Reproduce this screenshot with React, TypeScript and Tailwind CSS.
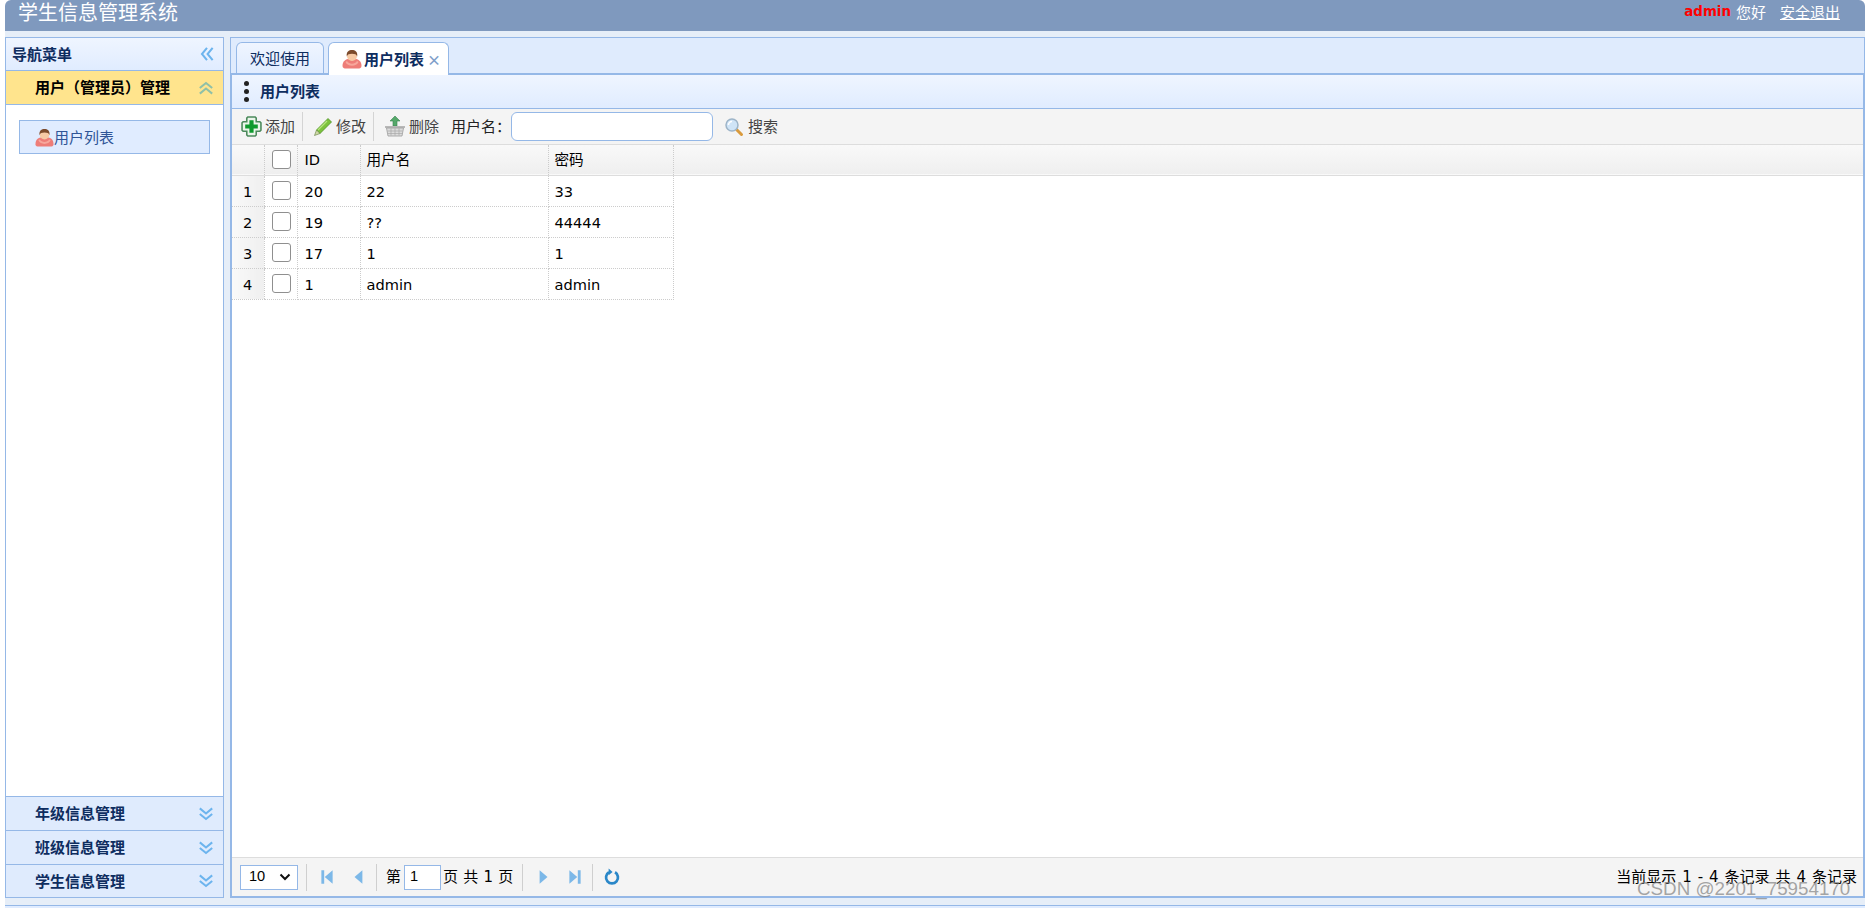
import React from "react";

const cjk = "font-['Noto_Sans_CJK_SC','Noto_Sans',sans-serif]";

function UserIcon({ size = 20 }: { size?: number }) {
  return (
    <svg width={size} height={size} viewBox="0 0 20 20" className="shrink-0">
      <path d="M0.500 17c0-5 3-7.500 9.500-7.500s9.500 2.500 9.500 7.500c0 2-2 2.500-3 2.500H3.500c-1 0-3-.5-3-2.500z" fill="#ee7d78" />
      <path d="M5 12c2 3.500 8 3.500 10 0l1.500 1c-2 5-11 5-13 0z" fill="#f7a79c" />
      <circle cx="10" cy="7" r="5" fill="#f6c9a4" />
      <path d="M4.800 7.500C4 2.500 7 1 10 1s6 1.500 5.200 6.500C14.500 5.500 13 4.800 10 4.800S5.500 5.500 4.800 7.500z" fill="#7b4a2b" />
    </svg>
  );
}

function DoubleChevron({ dir }: { dir: "up" | "down" | "left" }) {
  const rot = dir === "up" ? "rotate(180 8 8)" : dir === "left" ? "rotate(90 8 8)" : undefined;
  return (
    <svg width="18" height="18" viewBox="0 0 16 16" className="shrink-0">
      <g transform={rot} fill="none" stroke={dir === "up" ? "#8fc0a8" : "#6cb4ee"} strokeWidth="1.800">
        <path d="M2.500 3l5.500 4.500L13.500 3" />
        <path d="M2.500 8l5.500 4.500L13.500 8" />
      </g>
    </svg>
  );
}

function PlusIcon() {
  return (
    <svg width="21" height="21" viewBox="0 0 20 20" className="shrink-0">
      <path d="M6.500 1h7l1 1v3.500H18l1 1v7l-1 1h-3.500V18l-1 1h-7l-1-1v-3.500H2l-1-1v-7l1-1h3.500V2z" fill="#eaf5ea" stroke="#4c8a5c" strokeWidth="1.500" />
      <path d="M8 4h4v4h4v4h-4v4H8v-4H4V8h4z" fill="#0f9a2e" />
    </svg>
  );
}

function PencilIcon() {
  return (
    <svg width="20" height="20" viewBox="0 0 20 20" className="shrink-0">
      <path d="M15 1.500l3.500 3.500L7 16.500 3.500 13z" fill="#7cc23c" stroke="#4d8f22" strokeWidth="0.800" />
      <path d="M3.500 13L7 16.500 1.500 18.500z" fill="#cfd8a8" stroke="#5f7d3a" strokeWidth="0.600" />
      <path d="M14 4L5 13" stroke="#b6e47e" strokeWidth="1.200" />
    </svg>
  );
}

function BasketIcon() {
  return (
    <svg width="22" height="21" viewBox="0 0 22 21" className="shrink-0">
      <path d="M11 0l5 5h-3v5H9V5H6z" fill="#55a86a" stroke="#3b8450" strokeWidth="0.600" />
      <path d="M1 10h20v2H1z" fill="#b8b8b8" />
      <path d="M2.500 12h17l-1.500 8H4z" fill="#dcdcdc" stroke="#9c9c9c" strokeWidth="0.800" />
      <path d="M7 12.500v7M11 12.500v7M15 12.500v7M3.500 15h15M4 17.500h14" stroke="#a8a8a8" strokeWidth="0.700" />
    </svg>
  );
}

function SearchIcon() {
  return (
    <svg width="20" height="20" viewBox="0 0 20 20" className="shrink-0">
      <path d="M12.500 12.500l5 5" stroke="#d99a3c" strokeWidth="3" strokeLinecap="round" />
      <circle cx="8" cy="8" r="6" fill="#cfe4f7" stroke="#9db4c8" strokeWidth="1.500" />
      <path d="M4.500 8a3.500 3.500 0 0 1 3.500-3.500" stroke="#fff" strokeWidth="1.500" fill="none" />
    </svg>
  );
}

function PagerIcon({ kind }: { kind: "first" | "prev" | "next" | "last" }) {
  const c = "#7cb8e8";
  return (
    <svg width="18" height="18" viewBox="0 0 16 16" className="shrink-0">
      {kind === "first" && <path d="M3 2h2.500v12H3zM13 2v12L6 8z" fill={c} />}
      {kind === "prev" && <path d="M11 2v12L4 8z" fill={c} />}
      {kind === "next" && <path d="M5 2v12l7-6z" fill={c} />}
      {kind === "last" && <path d="M10.500 2H13v12h-2.500zM3 2v12l7-6z" fill={c} />}
    </svg>
  );
}

function RefreshIcon() {
  return (
    <svg width="18" height="18" viewBox="0 0 16 16" className="shrink-0">
      <path d="M5.300 3.800a5.300 5.300 0 1 0 5.400 0" fill="none" stroke="#2a87c8" strokeWidth="2.400" />
      <path d="M5 0.500v6L8.500 3.500z" fill="#2a87c8" />
    </svg>
  );
}

function Box() {
  return <span className="block w-[19px] h-[19px] bg-white border border-[#8f8f8f] rounded-[3px]" />;
}

function Sep() {
  return <span className="block w-px h-[29px] bg-[#d4d4d4] shrink-0" />;
}

function PagerSep() {
  return <span className="block w-px h-[27px] bg-[#cfcfcf] shrink-0" />;
}

function ToolBtn({ icon, label, className }: { icon: React.ReactNode; label: string; className?: string }) {
  return (
    <div className={"flex items-center shrink-0 gap-[3px] text-[#444] text-[15px] " + (className ?? "")}>
      {icon}
      <span>{label}</span>
    </div>
  );
}

function AccHeader({ label, last }: { label: string; last?: boolean }) {
  return (
    <div className={"flex items-center justify-between pl-[29px] pr-[8px] bg-[#dfebfd] border-t border-[#95b8e7] text-[#0e2d5f] text-[15px] font-bold " + (last ? "h-[33px]" : "h-[34px]")}>
      <span>{label}</span>
      <DoubleChevron dir="down" />
    </div>
  );
}

const rows = [
  ["1", "20", "22", "33"],
  ["2", "19", "??", "44444"],
  ["3", "17", "1", "1"],
  ["4", "1", "admin", "admin"],
];

export default function App() {
  return (
    <div className={"relative h-[908px] w-[1865px] overflow-hidden bg-white pl-[5px] flex flex-col " + cjk}>
      <div className="h-[31px] shrink-0 bg-[#7f99be] rounded-t-[6px] flex items-start justify-between pl-[13px] pr-[25px] text-white">
        <span className="text-[20px] leading-[22px] pt-[1px]">学生信息管理系统</span>
        <div className="flex items-center h-[23px] text-[15px] leading-[23px]">
          <span className="text-[#ff0000] font-bold font-['DejaVu_Sans',sans-serif] text-[13.4px] mr-[5px]">admin</span>
          <span className="mr-[14px]">您好</span>
          <span className="underline">安全退出</span>
        </div>
      </div>

      <div className="flex-1 min-h-0 bg-[#e6eef8] flex flex-col">
        <div className="flex-1 min-h-0 flex pt-[6px] gap-[6px]">
          {/* west */}
          <div className="w-[219px] h-[861px] shrink-0 border border-[#95b8e7] flex flex-col bg-white">
            <div className="h-[32px] shrink-0 flex items-center justify-between pl-[6px] pr-[7px] bg-gradient-to-b from-[#eff5ff] to-[#e0ecff] text-[#0e2d5f] text-[15px] font-bold">
              <span>导航菜单</span>
              <DoubleChevron dir="left" />
            </div>
            <div className="h-[35px] shrink-0 flex items-center justify-between pl-[29px] pr-[8px] bg-[#ffe48d] border-t border-b border-[#95b8e7] text-black text-[15px] font-bold">
              <span>用户（管理员）管理</span>
              <DoubleChevron dir="up" />
            </div>
            <div className="flex-1 min-h-0 pt-[15px] pl-[13px] pr-[13px]">
              <div className="h-[34px] flex items-center pl-[15px] bg-[#e0ecff] border border-[#95b8e7] text-[#2f5597] text-[15px]">
                <UserIcon size={19} />
                <span>用户列表</span>
              </div>
            </div>
            <AccHeader label="年级信息管理" />
            <AccHeader label="班级信息管理" />
            <AccHeader label="学生信息管理" last />
          </div>

          {/* center */}
          <div className="flex-1 min-w-0 h-[861px] flex flex-col">
            <div className="h-[38px] shrink-0 flex items-end gap-[4px] pl-[5px] bg-[#dfebfd] border border-b-2 border-[#95b8e7] relative">
              <div className="h-[31px] w-[88px] flex items-center justify-center rounded-t-[6px] border border-b-0 border-[#95b8e7] bg-gradient-to-b from-[#eff5ff] to-[#e0ecff] text-[#0e2d5f] text-[15px]">
                欢迎使用
              </div>
              <div className="h-[33px] -mb-[2px] w-[121px] flex items-center pl-[13px] rounded-t-[6px] border border-b-0 border-[#95b8e7] bg-white text-[#0e2d5f] text-[15px] font-bold">
                <UserIcon />
                <span className="ml-[2px]">用户列表</span>
                <span className="ml-[3px] text-[#7d9ec9] text-[14px] leading-none">×</span>
              </div>
            </div>

            <div className="flex-1 min-h-0 flex flex-col border-x-2 border-b-2 border-[#95b8e7] bg-white">
              <div className="h-[34px] shrink-0 flex items-center pl-[12px] bg-gradient-to-b from-[#eff5ff] to-[#e0ecff] border-b border-[#95b8e7] text-[#0e2d5f] text-[15px] font-bold">
                <span className="flex flex-col gap-[3px] mr-[11px]">
                  <span className="block w-[5px] h-[5px] rounded-full bg-[#222]" />
                  <span className="block w-[5px] h-[5px] rounded-full bg-[#222]" />
                  <span className="block w-[5px] h-[5px] rounded-full bg-[#222]" />
                </span>
                <span>用户列表</span>
              </div>

              <div className="h-[36px] shrink-0 flex items-center pl-[9px] bg-[#f4f4f4] border-b border-[#dddddd]">
                <ToolBtn icon={<PlusIcon />} label="添加" />
                <span className="ml-[7px] mr-[10px]"><Sep /></span>
                <ToolBtn icon={<PencilIcon />} label="修改" />
                <span className="ml-[7px] mr-[10px]"><Sep /></span>
                <ToolBtn icon={<BasketIcon />} label="删除" className="gap-[1px]" />
                <span className="ml-[12px] text-[15px] text-[#222] w-[60px] shrink-0 whitespace-nowrap">用户名：</span>
                <span className="block w-[202px] h-[29px] shrink-0 bg-white border border-[#95b8e7] rounded-[6px]" />
                <ToolBtn icon={<SearchIcon />} label="搜索" className="ml-[11px] gap-[4px]" />
              </div>

              <div className="flex-1 min-h-0">
                <table className="border-collapse table-fixed text-[14.6px] text-black font-['DejaVu_Sans','Noto_Sans_CJK_SC',sans-serif] w-full">
                  <colgroup>
                    <col className="w-[32px]" />
                    <col className="w-[33px]" />
                    <col className="w-[63px]" />
                    <col className="w-[188px]" />
                    <col className="w-[125px]" />
                    <col />
                  </colgroup>
                  <thead>
                    <tr className="h-[30px] bg-gradient-to-b from-[#f9f9f9] to-[#efefef] border-b border-[#dddddd]">
                      <th className="border-r border-dotted border-[#cccccc]" />
                      <th className="border-r border-dotted border-[#cccccc] font-normal">
                        <span className="flex justify-center pl-[2px]"><Box /></span>
                      </th>
                      <th className="border-r border-dotted border-[#cccccc] font-normal text-left pl-[7px]">ID</th>
                      <th className="border-r border-dotted border-[#cccccc] font-normal text-left pl-[6px]">用户名</th>
                      <th className="border-r border-dotted border-[#cccccc] font-normal text-left pl-[6px]">密码</th>
                      <th />
                    </tr>
                  </thead>
                  <tbody>
                    {rows.map((r) => (
                      <tr key={r[0]} className="h-[31px]">
                        <td className="bg-gradient-to-r from-[#f9f9f9] to-[#efefef] text-center border-b border-dotted border-[#cccccc] pt-[2px]">{r[0]}</td>
                        <td className="border border-dotted border-[#cccccc]">
                          <span className="flex justify-center pl-[2px]"><Box /></span>
                        </td>
                        <td className="border border-dotted border-[#cccccc] pl-[7px] pt-[2px]">{r[1]}</td>
                        <td className="border border-dotted border-[#cccccc] pl-[6px] pt-[2px]">{r[2]}</td>
                        <td className="border border-dotted border-[#cccccc] pl-[6px] pt-[2px]">{r[3]}</td>
                        <td />
                      </tr>
                    ))}
                  </tbody>
                </table>
              </div>

              <div className="h-[39px] shrink-0 flex items-center pl-[8px] pr-[6px] bg-[#f4f4f4] border-t border-[#dddddd] text-[15px] text-black font-['DejaVu_Sans','Noto_Sans_CJK_SC',sans-serif]">
                <span className="flex items-center justify-between w-[58px] h-[25px] shrink-0 bg-white border border-[#95b8e7] pl-[8px] pr-[6px] font-['Liberation_Sans',sans-serif] text-[14.6px]">
                  10
                  <svg width="12" height="8" viewBox="0 0 12 8"><path d="M1.500 1.500L6 6l4.500-4.500" fill="none" stroke="#111" strokeWidth="2" /></svg>
                </span>
                <span className="ml-[8px] mr-[11px]"><PagerSep /></span>
                <PagerIcon kind="first" />
                <span className="ml-[14px] mr-[8px]"><PagerIcon kind="prev" /></span>
                <PagerSep />
                <span className="ml-[9px] mr-[3px]">第</span>
                <span className="flex items-center w-[37px] h-[25px] shrink-0 bg-white border border-[#95b8e7] pl-[5px] font-['Liberation_Sans',sans-serif] text-[14.6px]">1</span>
                <span className="ml-[2px] mr-[9px] whitespace-pre [word-spacing:0.5px]">页 共 1 页</span>
                <PagerSep />
                <span className="ml-[11px] mr-[14px]"><PagerIcon kind="next" /></span>
                <PagerIcon kind="last" />
                <span className="ml-[8px] mr-[10px]"><PagerSep /></span>
                <RefreshIcon />
                <span className="ml-auto whitespace-pre [word-spacing:1.2px]">当前显示 1 - 4 条记录 共 4 条记录</span>
              </div>
            </div>
          </div>
        </div>
        <div className="h-[3px] shrink-0 bg-[#e0ecff] border-t border-[#95b8e7]" />
      </div>

      <span className="absolute left-[1637px] top-[879px] text-[18.8px] leading-[20px] text-[#808080]/70 font-['Liberation_Sans',sans-serif] whitespace-pre">CSDN @2201_75954170</span>
    </div>
  );
}
